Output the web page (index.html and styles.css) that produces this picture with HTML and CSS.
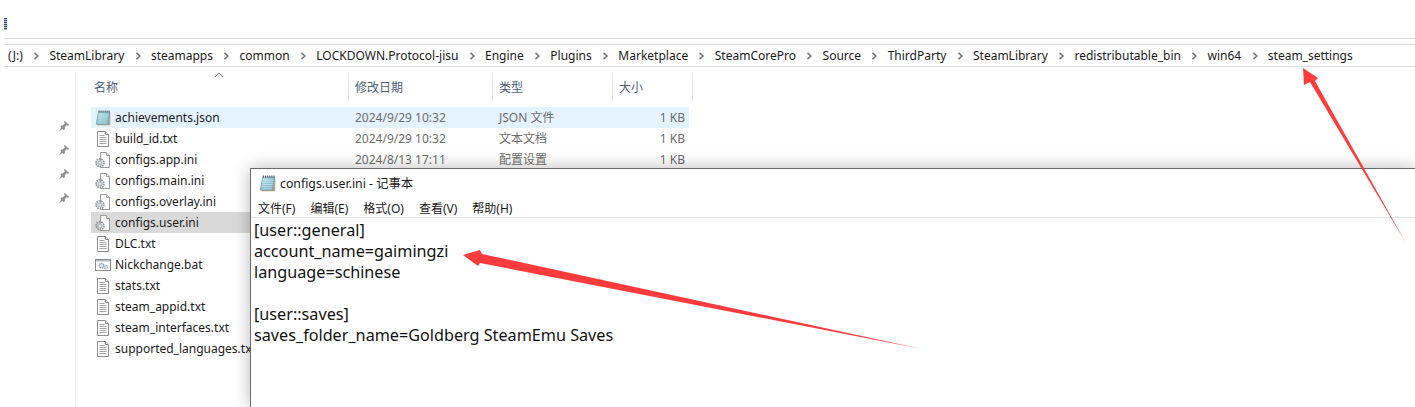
FILE: index.html
```html
<!DOCTYPE html>
<html lang="zh-CN">
<head>
<meta charset="utf-8">
<title>configs.user.ini</title>
<link rel="stylesheet" href="styles.css">
</head>
<body>
<svg class="defs" width="0" height="0" aria-hidden="true">
  <defs>
    <linearGradient id="teal" x1="0" y1="0" x2="1" y2="1"><stop offset="0" stop-color="#cfe9ee"/><stop offset=".5" stop-color="#8cc6d6"/><stop offset="1" stop-color="#5fa6bd"/></linearGradient>
  </defs>
  <symbol id="chev" viewBox="0 0 6 8"><path d="M1.5 .8 4.8 4 1.5 7.2" fill="none" stroke="#7a7a7a" stroke-width="1.7"/></symbol>
  <symbol id="pin" viewBox="0 0 12 12"><path d="M6.6 .8 11.2 5 9.9 5.7 8.5 5.2 6.7 7.6 6.9 9.2 5.8 9.9 2.4 6.5 3.1 5.4 4.6 5.6 7 3.6 6 2.2ZM3.4 7.6 4.6 8.8 .8 11.4Z" fill="#8f9296"/></symbol>
  <symbol id="note" viewBox="0 0 16 16"><path d="M13.2 3 15 2.6V15H2.5V14H13.6Z" fill="#c7b48f" stroke="#a08e6c" stroke-width=".5"/><path d="M3.4 2H14.6L13.2 14.2H1.2Z" fill="url(#teal)" stroke="#7e9aa6" stroke-width=".7"/><path d="M4.4 5H13.2M4.1 7H13M3.9 9H12.8M3.6 11H12.5M3.4 13H12.2" stroke="#d7eef3" stroke-width=".8" opacity=".8"/><path d="M3.6 1.5H14.8" stroke="#4a5960" stroke-width="2" stroke-dasharray="1 1"/></symbol>
  <symbol id="txt" viewBox="0 0 16 16"><path d="M2.5 .5H10.5L13.5 3.5V15.5H2.5Z" fill="#fff" stroke="#8d8d8d"/><path d="M10.5 .5V3.5H13.5" fill="#eee" stroke="#8d8d8d"/><path d="M4.5 4.5H9.5M4.5 6.5H11.5M4.5 8.5H11.5M4.5 10.5H11.5M4.5 12.5H11.5" stroke="#a3a3a3"/></symbol>
  <symbol id="ini" viewBox="0 0 16 16"><path d="M5.5 .5H11.5L14.5 3.5V15.5H5.5Z" fill="#fff" stroke="#9a9a9a"/><path d="M11.5 .5V3.5H14.5" fill="#eee" stroke="#9a9a9a"/><circle cx="5" cy="10.8" r="3.9" fill="none" stroke="#8b9299" stroke-width="1.7" stroke-dasharray="1.6 .8"/><circle cx="5" cy="10.8" r="2.6" fill="#b4bac0"/><circle cx="5" cy="10.8" r="1.1" fill="#f2f4f5"/></symbol>
  <symbol id="bat" viewBox="0 0 16 16"><rect x=".5" y="2.5" width="15" height="11" fill="#fff" stroke="#8b8b8b"/><path d="M1 3h14v1.5H1z" fill="#b9bec3"/><circle cx="6.5" cy="8.7" r="2.2" fill="#dfe8f1" stroke="#7f98b5" stroke-width="1.4" stroke-dasharray="1.2 .6"/><circle cx="10.6" cy="10.2" r="1.7" fill="#eef0f2" stroke="#93a0ab" stroke-width="1.2" stroke-dasharray="1 .5"/></symbol>
</svg>

<div class="toolbar"><span class="grip"></span></div>

<nav class="crumbs">
  <span>(J:)</span><svg class="chev"><use href="#chev"/></svg>
  <span>SteamLibrary</span><svg class="chev"><use href="#chev"/></svg>
  <span>steamapps</span><svg class="chev"><use href="#chev"/></svg>
  <span>common</span><svg class="chev"><use href="#chev"/></svg>
  <span>LOCKDOWN.Protocol-jisu</span><svg class="chev"><use href="#chev"/></svg>
  <span>Engine</span><svg class="chev"><use href="#chev"/></svg>
  <span>Plugins</span><svg class="chev"><use href="#chev"/></svg>
  <span>Marketplace</span><svg class="chev"><use href="#chev"/></svg>
  <span>SteamCorePro</span><svg class="chev"><use href="#chev"/></svg>
  <span>Source</span><svg class="chev"><use href="#chev"/></svg>
  <span>ThirdParty</span><svg class="chev"><use href="#chev"/></svg>
  <span>SteamLibrary</span><svg class="chev"><use href="#chev"/></svg>
  <span>redistributable_bin</span><svg class="chev"><use href="#chev"/></svg>
  <span>win64</span><svg class="chev"><use href="#chev"/></svg>
  <span>steam_settings</span>
</nav>

<main class="explorer">
  <aside class="nav">
    <svg class="pin"><use href="#pin"/></svg>
    <svg class="pin"><use href="#pin"/></svg>
    <svg class="pin"><use href="#pin"/></svg>
    <svg class="pin"><use href="#pin"/></svg>
  </aside>
  <section class="files">
    <div class="head">
      <div class="hcol hname">名称<svg class="sort" width="10" height="6"><path d="M1 5 5 1 9 5" fill="none" stroke="#7d7d7d"/></svg></div>
      <div class="hcol hdate">修改日期</div>
      <div class="hcol htype">类型</div>
      <div class="hcol hsize">大小</div>
    </div>
    <div class="row hover"><svg class="ficon"><use href="#note"/></svg><span class="name">achievements.json</span><span class="meta">2024/9/29 10:32</span><span class="meta">JSON 文件</span><span class="meta size">1 KB</span></div>
    <div class="row"><svg class="ficon"><use href="#txt"/></svg><span class="name">build_id.txt</span><span class="meta">2024/9/29 10:32</span><span class="meta">文本文档</span><span class="meta size">1 KB</span></div>
    <div class="row"><svg class="ficon"><use href="#ini"/></svg><span class="name">configs.app.ini</span><span class="meta">2024/8/13 17:11</span><span class="meta">配置设置</span><span class="meta size">1 KB</span></div>
    <div class="row"><svg class="ficon"><use href="#ini"/></svg><span class="name">configs.main.ini</span></div>
    <div class="row"><svg class="ficon"><use href="#ini"/></svg><span class="name">configs.overlay.ini</span></div>
    <div class="row selected"><svg class="ficon"><use href="#ini"/></svg><span class="name">configs.user.ini</span></div>
    <div class="row"><svg class="ficon"><use href="#txt"/></svg><span class="name">DLC.txt</span></div>
    <div class="row"><svg class="ficon"><use href="#bat"/></svg><span class="name">Nickchange.bat</span></div>
    <div class="row"><svg class="ficon"><use href="#txt"/></svg><span class="name">stats.txt</span></div>
    <div class="row"><svg class="ficon"><use href="#txt"/></svg><span class="name">steam_appid.txt</span></div>
    <div class="row"><svg class="ficon"><use href="#txt"/></svg><span class="name">steam_interfaces.txt</span></div>
    <div class="row"><svg class="ficon"><use href="#txt"/></svg><span class="name">supported_languages.txt</span></div>
  </section>
</main>

<div class="notepad">
  <div class="titlebar"><svg class="ticon"><use href="#note"/></svg><span>configs.user.ini - 记事本</span></div>
  <div class="menu"><span>文件(F)</span><span>编辑(E)</span><span>格式(O)</span><span>查看(V)</span><span>帮助(H)</span></div>
  <pre class="editor">[user::general]
account_name=gaimingzi
language=schinese

[user::saves]
saves_folder_name=Goldberg SteamEmu Saves</pre>
</div>

<svg class="arrows" width="1415" height="407" viewBox="0 0 1415 407" aria-hidden="true">
  <path d="M1303 68 1318 78 1315 81 1406 243 1310 82 1304 85Z" fill="#ff3b3b"/>
  <path d="M463 255 480 250 482 254 922 349 480 263 478 266Z" fill="#ff3b3b"/>
</svg>
</body>
</html>
```
FILE: styles.css
```css
* { box-sizing: border-box; }
html, body { margin: 0; height: 407px; overflow: hidden; background: #fff; }
body {
  position: relative;
  font-family: "Noto Sans", "Noto Sans CJK SC", sans-serif;
  font-size: 12px;
  color: #1a1a1a;
}
.defs { position: absolute; }

.toolbar { height: 39px; margin-left: 4px; border-bottom: 1px solid #dcdcdc; padding-top: 18px; }
.grip {
  display: block; width: 3px; height: 12px;
  background: repeating-linear-gradient(#2b4a6b 0 1px, #b9c6d4 1px 2px);
}

.crumbs {
  height: 23px; margin: 5px 0 0 4px; padding-left: 4px;
  display: flex; align-items: center; gap: 10.3px;
  border-top: 1px solid #dcdcdc; border-bottom: 1px solid #dcdcdc;
  white-space: nowrap;
  line-height: 20px;
}
.chev { width: 6px; height: 8px; flex: none; }

.explorer { display: flex; height: 340px; overflow: hidden; }
.nav {
  width: 76px; flex: none; margin-top: 6px;
  border-right: 1px solid #efefef;
  display: flex; flex-direction: column; align-items: flex-end;
  gap: 12px; padding: 47px 5px 0 0;
}
.pin { width: 12px; height: 12px; }

.files { padding-left: 15px; }
.head { display: flex; height: 27px; margin: 6px 0 7px; }
.hcol {
  position: relative; color: #4c607a; line-height: 29px;
  border-right: 1px solid #e5e5e5;
}
.hname { width: 258px; padding-left: 3px; }
.hdate { width: 144px; padding-left: 6px; }
.htype { width: 120px; padding-left: 6px; }
.hsize { width: 80px; padding-left: 6px; }
.sort { position: absolute; left: 123px; top: -1px; }

.row {
  display: grid; grid-template-columns: 24px 240px 144px 120px 66px;
  align-items: center; width: 598px; height: 21px; line-height: 21px;
  white-space: nowrap;
}
.row.hover { background: #e5f3ff; }
.row.selected { width: 160px; background: #d9d9d9; }
.ficon { width: 16px; height: 16px; margin-left: 4px; }
.meta { color: #6d6d6d; }
.size { text-align: right; }

.notepad {
  position: absolute; left: 250px; top: 168px; right: 0; bottom: 0;
  background: #fff; border: 1px solid #6b6b6b; border-width: 1px 0 0 1px;
  box-shadow: 0 0 16px rgba(0,0,0,.28);
}
.titlebar { display: flex; align-items: center; gap: 4px; height: 29px; padding-left: 8px; line-height: 29px; font-size: 12.3px; }
.ticon { width: 17px; height: 17px; }
.menu {
  display: flex; gap: 15px; height: 20px; padding-left: 7px;
  line-height: 22px; border-bottom: 1px solid #e4e4e4;
}
.editor {
  margin: 0; padding: 2px 0 0 3px;
  font: 16.2px/21px "Noto Sans", "Noto Sans CJK SC", sans-serif;
  color: #111;
}

.arrows { position: absolute; left: 0; top: 0; pointer-events: none; }
```
